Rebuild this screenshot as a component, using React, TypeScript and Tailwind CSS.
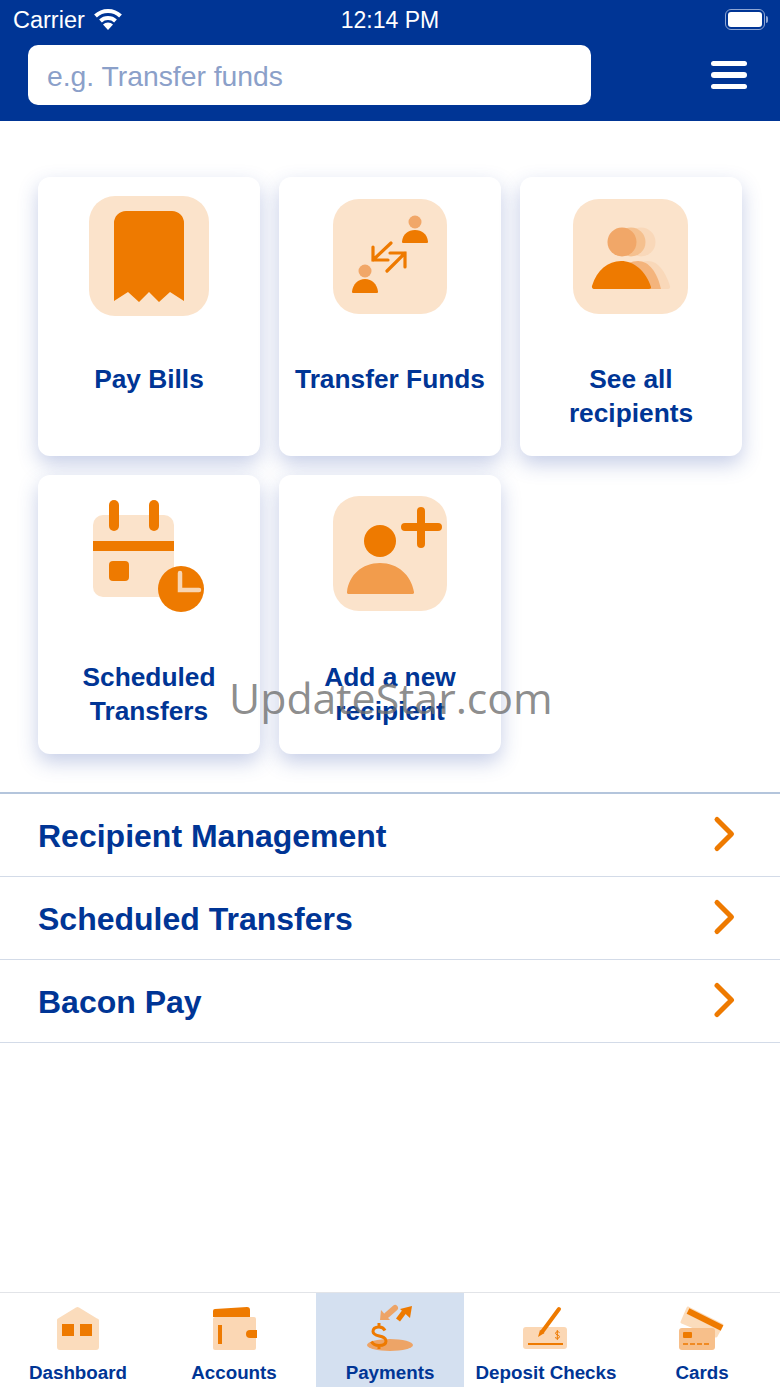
import type { ReactNode } from "react";

const ORANGE = "#ee7a00";
const PEACH = "#fbe3cb";
const MID = "#f1a768";

function PayBillsIcon() {
  return (
    <svg width="122" height="122" viewBox="0 0 122 122">
      <rect x="1" y="1" width="120" height="120" rx="26" fill={PEACH} />
      <path
        d="M26 28a12 12 0 0 1 12-12h46a12 12 0 0 1 12 12v78l-14-9-11 10-10-10-10 10-11-10-14 9z"
        fill={ORANGE}
      />
    </svg>
  );
}

function TransferIcon() {
  return (
    <svg width="116" height="116" viewBox="0 0 116 116">
      <rect x="1" y="0" width="114" height="115" rx="26" fill={PEACH} />
      <circle cx="83" cy="23" r="6.5" fill={MID} />
      <path d="M70 42.500C71 35 76 31 83 31s12 4 13 11.500c.1.900-.4 1.500-1 1.500H71c-.6 0-1.100-.6-1-1.500z" fill={ORANGE} />
      <circle cx="33" cy="72" r="6.5" fill={MID} />
      <path d="M20 92.500C21 85 26 80 33 80s12 5 13 12.500c.1.900-.4 1.500-1 1.500H21c-.6 0-1.100-.6-1-1.500z" fill={ORANGE} />
      <path
        d="M59 44 41 61M41 48v13h15M55 72l18-18M58 54h15v14"
        fill="none"
        stroke={ORANGE}
        strokeWidth="3.200"
        strokeLinecap="round"
      />
    </svg>
  );
}

function RecipientsIcon() {
  return (
    <svg width="116" height="116" viewBox="0 0 116 116">
      <rect x="0" y="0" width="115" height="115" rx="26" fill={PEACH} />
      <circle cx="68" cy="43" r="14.500" fill="#f9d8b9" />
      <path d="M50 90c2-17 12-28 25-28 10 0 17 10 22 25 .5 2-.5 3-2 3z" fill="#f9d8b9" />
      <circle cx="58" cy="43" r="14.500" fill="#f5c08e" />
      <path d="M40 90c2-17 12-28 25-28 11 0 19 11 23 28z" fill="#f4b47c" />
      <circle cx="49" cy="43" r="14.500" fill={MID} />
      <path d="M19 87C24 71 35 62 48 62s25 10 30 26c.3 1.200-.5 2-2 2H21c-1.500 0-2.500-1.500-2-3z" fill={ORANGE} />
    </svg>
  );
}

function ScheduledIcon() {
  return (
    <svg width="116" height="116" viewBox="0 0 116 116">
      <rect x="2" y="15" width="81" height="82" rx="10" fill={PEACH} />
      <rect x="18" y="0" width="10" height="31" rx="5" fill={ORANGE} />
      <rect x="58" y="0" width="10" height="31" rx="5" fill={ORANGE} />
      <rect x="2" y="41" width="81" height="10" fill={ORANGE} />
      <rect x="18" y="61" width="20" height="20" rx="4" fill={ORANGE} />
      <circle cx="90" cy="89" r="23" fill={ORANGE} />
      <path d="M89 73v17h19" fill="none" stroke="#f8d5b3" strokeWidth="4.500" strokeLinecap="round" />
    </svg>
  );
}

function AddRecipientIcon() {
  return (
    <svg width="116" height="116" viewBox="0 0 116 116">
      <rect x="1" y="0" width="114" height="115" rx="26" fill={PEACH} />
      <circle cx="48" cy="45" r="16" fill={ORANGE} />
      <path d="M15 96c2-17 15-29 33-29s31 12 34 29c.2 1.200-.4 2-1.500 2h-64c-1.100 0-1.700-.8-1.500-2z" fill="#f29c4c" />
      <path d="M89 15v33M73 31h33" fill="none" stroke={ORANGE} strokeWidth="8" strokeLinecap="round" />
    </svg>
  );
}

function DashboardTabIcon() {
  return (
    <svg width="46" height="46" viewBox="0 0 46 46">
      <path
        d="M2 15a2 2 0 0 1 1-1.500L21 2.500a3 3 0 0 1 3 0l18 11a2 2 0 0 1 2 1.500v27a3 3 0 0 1-3 3H5a3 3 0 0 1-3-3z"
        fill="#fbdcbc"
      />
      <rect x="7" y="19" width="12" height="12" fill={ORANGE} />
      <rect x="25" y="19" width="12" height="12" fill={ORANGE} />
    </svg>
  );
}

function AccountsTabIcon() {
  return (
    <svg width="46" height="46" viewBox="0 0 46 46">
      <rect x="2" y="12" width="43" height="33" rx="2" fill="#fbd7b4" />
      <path d="M2 6a2 2 0 0 1 2-2l32-2a3 3 0 0 1 3 3v7H2z" fill={ORANGE} />
      <rect x="7" y="20" width="4" height="19" fill={ORANGE} />
      <path d="M39 25h7v8h-7a4 4 0 0 1 0-8z" fill={ORANGE} />
    </svg>
  );
}

function PaymentsTabIcon() {
  return (
    <svg width="50" height="48" viewBox="0 0 50 48">
      <ellipse cx="25" cy="42" rx="23" ry="6" fill="#eda467" />
      <path d="M22 12 30 5" stroke="#eda467" strokeWidth="6" strokeLinecap="round" />
      <path d="m15 17 1-10 9 10z" fill="#eda467" />
      <path d="M33 17 39 9" stroke={ORANGE} strokeWidth="5" />
      <path d="m47 3-12 3 10 9z" fill={ORANGE} />
      <path
        d="M20 27.500c-1.500-3-4-3.500-6-3.500-4 0-6 2-6 4.500 0 6 13 3 13 9.500 0 3-3 4.500-7 4.500-3 0-6-1-7.500-4M14 20v4M14 42v4"
        fill="none"
        stroke={ORANGE}
        strokeWidth="3"
      />
    </svg>
  );
}

function DepositTabIcon() {
  return (
    <svg width="46" height="46" viewBox="0 0 46 46">
      <rect x="0" y="22" width="44" height="22" rx="3" fill="#fbd7b4" />
      <path d="M36 4 19 27" fill="none" stroke={ORANGE} strokeWidth="4" strokeLinecap="round" />
      <path d="m17 25 4.500 3-6.500 4z" fill={ORANGE} />
      <path d="M5 39h35" stroke={ORANGE} strokeWidth="2" />
      <path
        d="M36.500 27.500c-1.200-1.200-4-1-4 .8s4 1.400 4 3.400-3 2-4.500.8M34.300 25v10"
        fill="none"
        stroke={ORANGE}
        strokeWidth="1"
      />
    </svg>
  );
}

function CardsTabIcon() {
  return (
    <svg width="46" height="46" viewBox="0 0 46 46">
      <path d="m9 3 34 17-6 11-34-14z" fill="#fbdcbc" stroke="#fbdcbc" strokeWidth="3" strokeLinejoin="round" />
      <path d="m9 6 34 17" stroke={ORANGE} strokeWidth="6" />
      <rect x="0" y="23" width="36" height="22" rx="3" fill="#f7bf8a" />
      <rect x="4" y="27" width="9" height="6" rx="1" fill={ORANGE} />
      <path d="M4 39h5M11 39h5M18 39h5M25 39h5" stroke={ORANGE} strokeWidth="1.500" />
    </svg>
  );
}

function Card({ icon, label, top }: { icon: ReactNode; label: ReactNode; top: string }) {
  return (
    <div className="flex h-[279px] flex-col items-center rounded-xl bg-white shadow-[0_8px_20px_rgba(50,80,170,0.28)]">
      <div className={`flex h-[160px] w-full items-start justify-center ${top}`}>{icon}</div>
      <div className="w-full pt-[25px] text-center text-[26.3px] leading-[34px] font-bold text-[#003595]">
        {label}
      </div>
    </div>
  );
}

function Row({ title }: { title: string }) {
  return (
    <div className="flex h-[83px] items-center justify-between border-b border-[#d3dbe8] pr-[44px] pl-[38px]">
      <span className="pt-[1px] text-[32px] font-bold text-[#003595]">{title}</span>
      <svg className="-mt-[2px]" width="24" height="38" viewBox="0 0 24 38">
        <path
          d="M5 4.500 19.500 19 5 33.500"
          fill="none"
          stroke={ORANGE}
          strokeWidth="5"
          strokeLinecap="round"
          strokeLinejoin="round"
        />
      </svg>
    </div>
  );
}

function Tab({ icon, label, active }: { icon: ReactNode; label: string; active?: boolean }) {
  return (
    <div className={`mx-1 flex flex-col items-center ${active ? "bg-[#d4e0f0]" : ""}`}>
      <div className="flex h-[58px] items-end justify-center">{icon}</div>
      <span className="mt-[8px] whitespace-nowrap text-[18.8px] font-bold text-[#003595]">{label}</span>
    </div>
  );
}

export default function App() {
  return (
    <div className="relative flex h-[1387px] w-[780px] flex-col overflow-hidden bg-white font-['Liberation_Sans',sans-serif]">
      {/* header + fake status bar */}
      <header className="h-[121px] shrink-0 bg-[#003595] text-white">
        <div className="relative flex h-[45px] items-center px-[13px] pb-[5px]">
          <span className="pt-[2px] text-[23.5px]">Carrier</span>
          <svg className="mb-[3px] ml-[9px]" width="28" height="22" viewBox="0 0 28 22">
            <path d="M1.500 8a18 18 0 0 1 25 0" fill="none" stroke="white" strokeWidth="4" />
            <path d="M6.500 13a11 11 0 0 1 15 0" fill="none" stroke="white" strokeWidth="4" />
            <path d="m14 22-5-5.500a7 7 0 0 1 10 0z" fill="white" />
          </svg>
          <span className="absolute left-0 w-full text-center text-[23px]">12:14 PM</span>
          <div className="absolute top-[9px] left-[725px] h-[21px] w-[40px] rounded-[6px] border border-[#8ea6d4] p-[2px]">
            <div className="h-full w-full rounded-[3px] bg-white" />
          </div>
          <div className="absolute top-[16px] left-[766px] h-[7px] w-[2px] rounded-r-sm bg-[#8ea6d4]" />
        </div>
        <div className="flex items-center pl-[28px]">
          <div className="flex h-[60px] w-[563px] items-center rounded-[10px] bg-white pt-[3px] pl-[19px] text-[28.3px] text-[#8ba0c9]">
            e.g. Transfer funds
          </div>
          <div className="ml-[120px] flex w-[36px] flex-col gap-[6px]">
            <div className="h-[5px] rounded-full bg-white" />
            <div className="h-[6px] rounded-full bg-white" />
            <div className="h-[5px] rounded-full bg-white" />
          </div>
        </div>
      </header>

      <main className="flex-1">
        <div className="grid grid-cols-3 gap-[19px] px-[38px] pt-[56px]">
          <Card top="pt-[18px]" icon={<PayBillsIcon />} label="Pay Bills" />
          <Card top="pt-[22px]" icon={<TransferIcon />} label="Transfer Funds" />
          <Card
            top="pt-[22px]"
            icon={<RecipientsIcon />}
            label={
              <>
                See all
                <br />
                recipients
              </>
            }
          />
          <Card
            top="pt-[25px]"
            icon={<ScheduledIcon />}
            label={
              <>
                Scheduled
                <br />
                Transfers
              </>
            }
          />
          <Card
            top="pt-[21px]"
            icon={<AddRecipientIcon />}
            label={
              <>
                Add a new
                <br />
                recipient
              </>
            }
          />
        </div>

        <div className="mt-[38px] border-t-2 border-[#b4c5dc]">
          <Row title="Recipient Management" />
          <Row title="Scheduled Transfers" />
          <Row title="Bacon Pay" />
        </div>
      </main>

      <nav className="grid h-[95px] shrink-0 grid-cols-5 border-t border-[#e2e4e8] bg-white">
        <Tab icon={<DashboardTabIcon />} label="Dashboard" />
        <Tab icon={<AccountsTabIcon />} label="Accounts" />
        <Tab icon={<PaymentsTabIcon />} label="Payments" active />
        <Tab icon={<DepositTabIcon />} label="Deposit Checks" />
        <Tab icon={<CardsTabIcon />} label="Cards" />
      </nav>

      {/* watermark */}
      <div className="absolute top-[668px] left-[229px] font-['Open_Sans',sans-serif] text-[42.8px] leading-[60px] whitespace-nowrap text-[#6f6f6f]/80">
        UpdateStar.com
      </div>
    </div>
  );
}
